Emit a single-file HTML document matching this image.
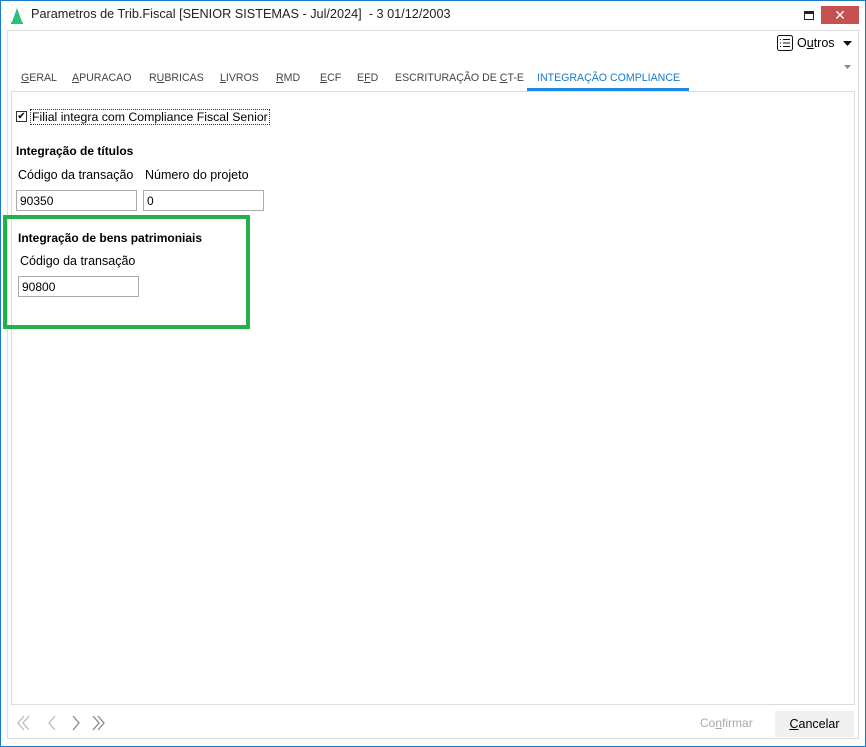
<!DOCTYPE html>
<html><head><style>
*{margin:0;padding:0;box-sizing:border-box}
body{width:866px;height:747px;background:#fff;font-family:"Liberation Sans",sans-serif;font-size:12px;color:#000;position:relative;overflow:hidden}
.a{position:absolute}
.win{left:0;top:0;width:866px;height:747px;border:1px solid #1979ca;border-top:1px solid #1979ca}
.u{text-decoration:underline}
.tab{top:72px;color:#444;font-size:10.6px;white-space:nowrap}
.inp{border:1px solid #aaa;height:21px;padding:3px 3px;font-size:12px;background:#fff}
</style></head><body>
<div class="a win"></div>
<svg class="a" style="left:10px;top:8px" width="14" height="16"><polygon points="7,0 12,14 2,14" fill="#2fbf7a"/><rect x="1" y="14" width="12" height="2" fill="#2fbf7a"/></svg>
<div class="a" style="left:31px;top:7px;font-size:12.7px;color:#222;white-space:nowrap">Parametros de Trib.Fiscal [SENIOR SISTEMAS - Jul/2024]&nbsp; - 3 01/12/2003</div>
<div class="a" style="left:804px;top:11px;width:10px;height:9px;border:1.5px solid #222;border-top-width:3px"></div>
<div class="a" style="left:821px;top:6px;width:38px;height:18px;background:#c75050;color:#fff;text-align:center;font-size:14px;line-height:18px">✕</div>
<div class="a" style="left:7px;top:30px;width:852px;height:709px;border:1px solid #ddd"></div>
<svg class="a" style="left:777px;top:35px" width="16" height="16"><rect x="0.5" y="0.5" width="15" height="15" rx="2" fill="none" stroke="#111"/><g stroke="#111"><line x1="3" y1="4.5" x2="4" y2="4.5"/><line x1="6" y1="4.5" x2="13" y2="4.5"/><line x1="3" y1="8" x2="4" y2="8"/><line x1="6" y1="8" x2="13" y2="8"/><line x1="3" y1="11.5" x2="4" y2="11.5"/><line x1="6" y1="11.5" x2="13" y2="11.5"/></g></svg>
<div class="a" style="left:797px;top:36px;font-size:12.5px">O<span class="u">u</span>tros</div>
<svg class="a" style="left:843px;top:41px" width="9" height="5"><polygon points="0,0 9,0 4.5,5" fill="#111"/></svg>
<svg class="a" style="left:844px;top:65px" width="7" height="4"><polygon points="0,0 7,0 3.5,4" fill="#888"/></svg>
<div class="a tab" style="left:21px"><span class="u">G</span>ERAL</div>
<div class="a tab" style="left:72px"><span class="u">A</span>PURACAO</div>
<div class="a tab" style="left:149px">R<span class="u">U</span>BRICAS</div>
<div class="a tab" style="left:220px"><span class="u">L</span>IVROS</div>
<div class="a tab" style="left:276px"><span class="u">R</span>MD</div>
<div class="a tab" style="left:320px"><span class="u">E</span>CF</div>
<div class="a tab" style="left:357px">E<span class="u">F</span>D</div>
<div class="a tab" style="left:395px">ESCRITURAÇÃO DE <span class="u">C</span>T-E</div>
<div class="a tab" style="left:537px;color:#1979ca">INTEGRAÇÃO COMPLIANCE</div>
<div class="a" style="left:527px;top:88px;width:162px;height:3px;background:#1e88e5"></div>
<div class="a" style="left:11px;top:91px;width:844px;height:614px;border:1px solid #ddd"></div>
<div class="a" style="left:16px;top:111px;width:11px;height:11px;border:1px solid #333;font-size:10px;line-height:9px;text-align:center">✔</div>
<div class="a" style="left:30px;top:109px;border:1px dotted #333;padding:0 1px;font-size:12.3px">Filial integra com Compliance Fiscal Senior</div>
<div class="a" style="left:16px;top:144px;font-weight:bold">Integração de títulos</div>
<div class="a" style="left:18px;top:168px;font-size:12.5px">Código da transação</div>
<div class="a" style="left:145px;top:168px;font-size:12.5px">Número do projeto</div>
<div class="a inp" style="left:16px;top:190px;width:121px">90350</div>
<div class="a inp" style="left:143px;top:190px;width:121px">0</div>
<div class="a" style="left:3px;top:215px;width:247px;height:114px;border:4px solid #22b04b"></div>
<div class="a" style="left:18px;top:231px;font-weight:bold">Integração de bens patrimoniais</div>
<div class="a" style="left:20px;top:254px;font-size:12.5px">Código da transação</div>
<div class="a inp" style="left:18px;top:276px;width:121px">90800</div>
<svg class="a" style="left:16px;top:715px" width="96" height="16" fill="none" stroke-width="1.3">
<g stroke="#bbb"><path d="M8 1 L2 8 L8 15 M13 1 L7 8 L13 15"/><path d="M39 1 L33 8 L39 15"/></g>
<g stroke="#888"><path d="M57 1 L63 8 L57 15"/><path d="M77 1 L83 8 L77 15 M82 1 L88 8 L82 15"/></g>
</svg>
<div class="a" style="left:700px;top:716px;color:#aaa;font-size:12px">Co<span class="u">n</span>firmar</div>
<div class="a" style="left:775px;top:711px;width:79px;height:26px;background:#f0f0f0;text-align:center;line-height:26px;font-size:12.5px"><span class="u">C</span>ancelar</div>
</body></html>
